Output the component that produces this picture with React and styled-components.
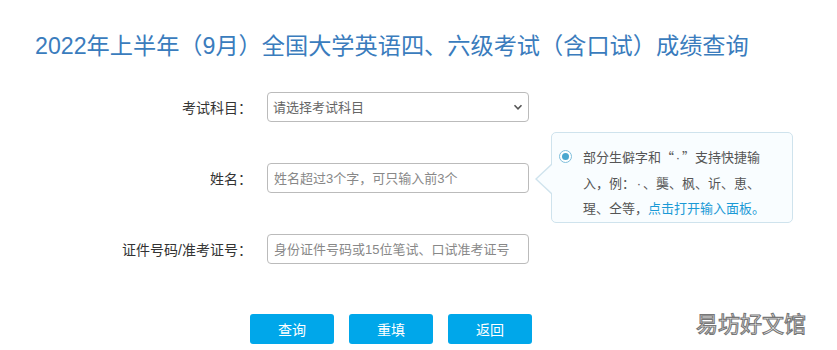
import styled, { createGlobalStyle } from "styled-components";

const GlobalStyle = createGlobalStyle`
    html, body {
        margin: 0;
        padding: 0;
        background: #fff;
    }
    body {
        font-family: "Liberation Sans", "Noto Sans CJK SC", sans-serif;
    }
`

const Chevron = () => (
    <svg width="10" height="10" viewBox="0 0 10 10">
        <path d="M1.5 3.3 L5 6.8 L8.5 3.3" fill="none" stroke="#555" strokeWidth="1.6" />
    </svg>
)

const App = () => {
    return (
        <Page>
            <GlobalStyle />
            <Titre>2022年上半年（9月）全国大学英语四、六级考试（含口试）成绩查询</Titre>
            <Formulaire>
                <Rangee>
                    <Etiquette>考试科目：</Etiquette>
                    <Champ>
                        <Choix defaultValue="">
                            <option value="">请选择考试科目</option>
                        </Choix>
                        <Fleche><Chevron /></Fleche>
                    </Champ>
                </Rangee>
                <Rangee>
                    <Etiquette>姓名：</Etiquette>
                    <Champ>
                        <Saisie placeholder="姓名超过3个字，可只输入前3个" />
                        <Bulle>
                            <Radio />
                            <p>
                                部分生僻字和“<Point>·</Point>”支持快捷输<br />
                                入，例：<Point>·</Point>、龑、枫、䜣、恵、<br />
                                瑆、仝等，<Lien>点击打开输入面板。</Lien>
                            </p>
                        </Bulle>
                    </Champ>
                </Rangee>
                <Rangee>
                    <Etiquette>证件号码/准考证号：</Etiquette>
                    <Champ>
                        <Saisie placeholder="身份证件号码或15位笔试、口试准考证号" />
                    </Champ>
                </Rangee>
            </Formulaire>
            <Boutons>
                <Bouton>查询</Bouton>
                <Bouton>重填</Bouton>
                <Bouton>返回</Bouton>
            </Boutons>
            <Filigrane>易坊好文馆</Filigrane>
        </Page>
    )
}

const Page = styled.div`
    position: relative;
    height: 350px;
    padding-top: 30px;
    box-sizing: border-box;
    overflow: hidden;
`

const Titre = styled.h1`
    margin: 0 0 0 35px;
    font-size: 23.2px;
    line-height: 32px;
    font-weight: normal;
    color: #3a7cbd;
    white-space: nowrap;
`

const Formulaire = styled.div`
    display: flex;
    flex-direction: column;
    gap: 41px;
    margin-top: 30px;
`

const Rangee = styled.div`
    display: grid;
    grid-template-columns: 252px 262px;
    column-gap: 15px;
    align-items: center;
`

const Etiquette = styled.label`
    text-align: right;
    font-size: 14px;
    color: #333;
    white-space: nowrap;
`

const Champ = styled.div`
    position: relative;
    height: 30px;
`

const Choix = styled.select`
    appearance: none;
    width: 100%;
    height: 30px;
    box-sizing: border-box;
    border: 1px solid #bbb;
    border-radius: 4px;
    background: #fff;
    padding: 0 0 0 5px;
    font-family: inherit;
    font-size: 13px;
    color: #666;
    outline: none;
`

const Fleche = styled.span`
    position: absolute;
    right: 6px;
    top: 10px;
    pointer-events: none;
    line-height: 0;
`

const Saisie = styled.input`
    width: 100%;
    height: 30px;
    box-sizing: border-box;
    border: 1px solid #bbb;
    border-radius: 4px;
    padding: 0 0 0 6px;
    font-family: inherit;
    font-size: 13px;
    color: #333;
    outline: none;
    &::placeholder {
        color: #888;
    }
`

const Bulle = styled.div`
    position: absolute;
    left: 284px;
    top: -31px;
    width: 242px;
    height: 91px;
    box-sizing: border-box;
    padding: 12px 0 0 31px;
    border: 1px solid #cfe3ed;
    border-radius: 5px;
    background: #f9fdff;

    &::before, &::after {
        content: "";
        position: absolute;
        top: 30px;
        width: 0;
        height: 0;
        border-style: solid;
        border-color: transparent;
    }
    &::before {
        left: -17px;
        border-width: 16px 17px 16px 0;
        border-right-color: #cfe3ed;
    }
    &::after {
        left: -15px;
        top: 31px;
        border-width: 15px 16px 15px 0;
        border-right-color: #f9fdff;
    }

    p {
        margin: 0;
        font-family: "Noto Sans CJK SC", sans-serif;
        font-size: 13px;
        line-height: 24.5px;
        color: #555;
        white-space: nowrap;
    }
`

const Point = styled.span`
    display: inline-block;
    width: 8px;
    text-align: center;
    font-family: "Liberation Sans", sans-serif;
`

const Radio = styled.span`
    position: absolute;
    left: 7px;
    top: 17px;
    width: 13px;
    height: 13px;
    box-sizing: border-box;
    border: 1px solid #7fbfdc;
    border-radius: 50%;
    background: #fff;

    &::after {
        content: "";
        position: absolute;
        left: 2px;
        top: 2px;
        width: 7px;
        height: 7px;
        border-radius: 50%;
        background: #4aa7cf;
    }
`

const Lien = styled.span`
    color: #1b9ad6;
`

const Boutons = styled.div`
    display: flex;
    gap: 15px;
    margin: 50px 0 0 250px;
`

const Bouton = styled.button`
    width: 84px;
    height: 30px;
    border: none;
    border-radius: 3px;
    background: #00a7ea;
    color: #fff;
    font-family: inherit;
    font-size: 14px;
    cursor: pointer;
`

const Filigrane = styled.div`
    position: absolute;
    right: 31px;
    bottom: 15px;
    font-family: "Noto Sans CJK SC", sans-serif;
    font-size: 22px;
    line-height: 26px;
    font-weight: normal;
    color: #fff;
    -webkit-text-stroke: 1.1px #777;
`

export default App;
